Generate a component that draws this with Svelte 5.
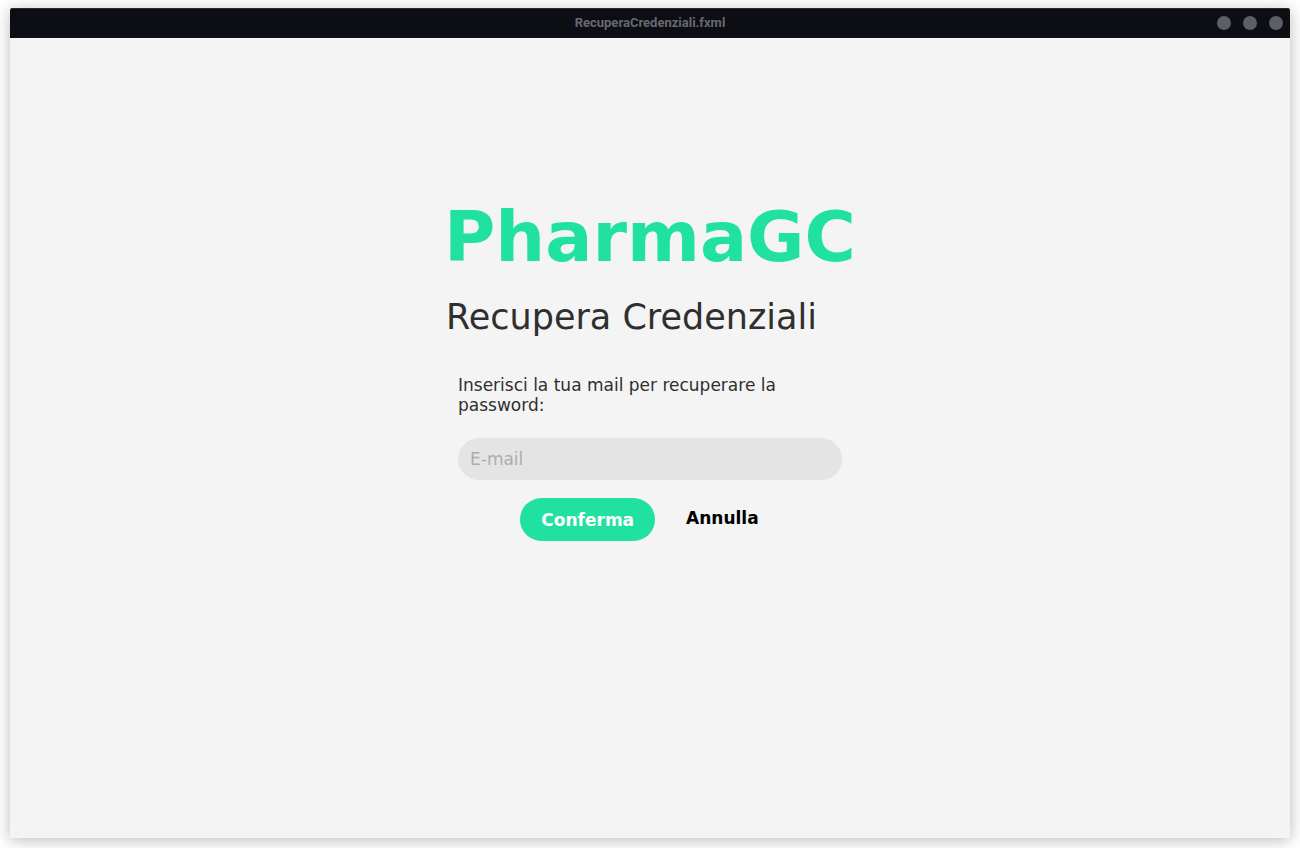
<script>
  let email = $state('');
</script>

<div class="desktop">
  <div class="window">
    <header class="titlebar">
      <span class="title">RecuperaCredenziali.fxml</span>
      <div class="controls">
        <button type="button" aria-label="Riduci"></button>
        <button type="button" aria-label="Ingrandisci"></button>
        <button type="button" aria-label="Chiudi"></button>
      </div>
    </header>
    <main>
      <div class="panel">
        <h1>PharmaGC</h1>
        <h2>Recupera Credenziali</h2>
        <form onsubmit={(event) => event.preventDefault()}>
          <label for="email">Inserisci la tua mail per recuperare la password:</label>
          <input id="email" type="email" placeholder="E-mail" bind:value={email} />
          <div class="actions">
            <button class="confirm" type="submit">Conferma</button>
            <button class="cancel" type="button">Annulla</button>
          </div>
        </form>
      </div>
    </main>
  </div>
</div>

<style>
  .desktop {
    box-sizing: border-box;
    min-height: 100vh;
    display: flex;
    overflow: hidden;
    padding: 8px 10px 10px;
    background: #fff;
    font-family: "DejaVu Sans", sans-serif;
  }

  .window {
    flex: 1;
    display: flex;
    flex-direction: column;
    border-radius: 3px 3px 0 0;
    background: #f4f4f4;
    box-shadow: 0 2px 16px rgba(0, 0, 0, 0.28);
  }

  .titlebar {
    box-sizing: border-box;
    display: grid;
    grid-template-columns: 1fr auto 1fr;
    align-items: center;
    height: 30px;
    padding: 0 7px;
    border-radius: 3px 3px 0 0;
    background: #0d0e13;
    box-shadow: inset 0 1px #27282d;
  }

  .title {
    grid-column: 2;
    color: #686873;
    font: 700 13px/30px Roboto, sans-serif;
  }

  .controls {
    display: flex;
    justify-content: flex-end;
    gap: 12px;
  }

  .controls button {
    width: 14px;
    height: 14px;
    padding: 0;
    border: 0;
    border-radius: 50%;
    background: #5e5f66;
  }

  main {
    display: flex;
    justify-content: center;
    padding-top: 156px;
  }

  .panel {
    width: 408px;
  }

  h1 {
    display: flex;
    justify-content: center;
    margin: 0;
    color: #20e1a0;
    font-size: 70px;
    line-height: 86px;
    white-space: nowrap;
  }

  h2 {
    margin: 16px 0 0;
    color: #2f2f2f;
    font-size: 35px;
    font-weight: 400;
    line-height: 42px;
    white-space: nowrap;
  }

  form {
    padding: 37px 12px 0;
  }

  label {
    display: block;
    max-width: 340px;
    color: #2f2f2f;
    font-size: 17px;
    line-height: 20px;
  }

  input {
    display: block;
    box-sizing: border-box;
    width: 100%;
    height: 42px;
    margin-top: 23px;
    padding: 0 12px;
    border: 0;
    border-radius: 21px;
    background: #e4e4e4;
    color: #2f2f2f;
    font: 17px "DejaVu Sans", sans-serif;
  }

  input::placeholder {
    color: #adadad;
    opacity: 1;
  }

  .actions {
    display: flex;
    justify-content: center;
    gap: 10px;
    margin-top: 18px;
  }

  .actions button {
    padding: 0 21px;
    border: 0;
    font: 700 17px "DejaVu Sans", sans-serif;
  }

  .confirm {
    height: 43px;
    border-radius: 22px;
    background: #20e1a0;
    color: #fff;
  }

  .actions .cancel {
    height: 40px;
    background: transparent;
    color: #000;
  }
</style>
